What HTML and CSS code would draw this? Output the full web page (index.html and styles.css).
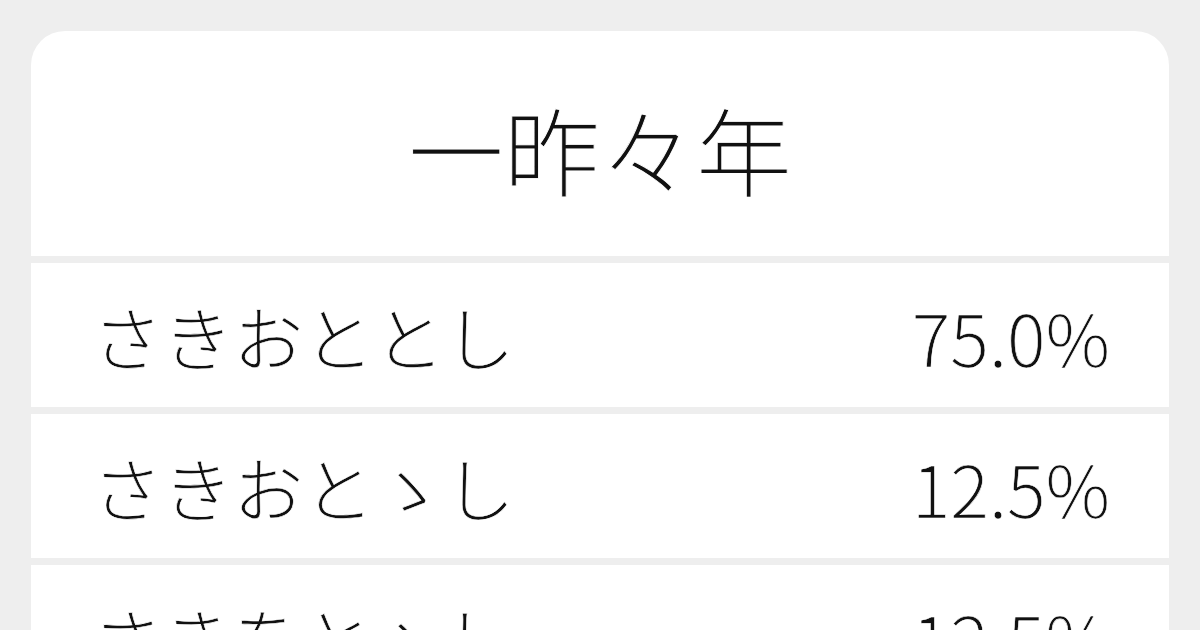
FILE: index.html
```html
<!DOCTYPE html>
<html lang="ja">
<head>
<meta charset="utf-8">
<link rel="stylesheet" href="styles.css">
</head>
<body>
<div class="page">
  <div class="card">
    <div class="head"><h1 class="title">一昨々年</h1></div>
    <div class="row"><span class="yomi">さきおととし</span><span class="pct">75.0%</span></div>
    <div class="row"><span class="yomi">さきおとゝし</span><span class="pct">12.5%</span></div>
    <div class="row"><span class="yomi">さきをとゝし</span><span class="pct">12.5%</span></div>
  </div>
</div>
</body>
</html>
```

FILE: styles.css
```css
html, body {
  margin: 0;
  padding: 0;
  background: #eeeeee;
  width: 1200px;
  height: 630px;
  overflow: hidden;
}
body {
  font-family: "Noto Sans CJK JP", "Noto Sans", sans-serif;
  color: #111111;
}
.page {
  padding: 31px 31px 0 31px;
}
.card {
  display: flex;
  flex-direction: column;
  gap: 7px;
  border-radius: 34px 34px 0 0;
  overflow: hidden;
}
.head {
  background: #ffffff;
  height: 225px;
  display: flex;
  align-items: center;
  justify-content: center;
}
.title {
  margin: 0;
  padding-top: 8px;
  font-size: 96px;
  font-weight: 300;
  line-height: 1;
  -webkit-text-stroke: 0.9px #ffffff;
}
.row {
  background: #ffffff;
  height: 144px;
  flex: none;
  display: flex;
  align-items: center;
  justify-content: space-between;
  padding: 0 59px 0 61px;
  font-size: 70.5px;
  font-weight: 300;
  -webkit-text-stroke: 0.6px #ffffff;
}
.pct {
  font-size: 72px;
}
```
